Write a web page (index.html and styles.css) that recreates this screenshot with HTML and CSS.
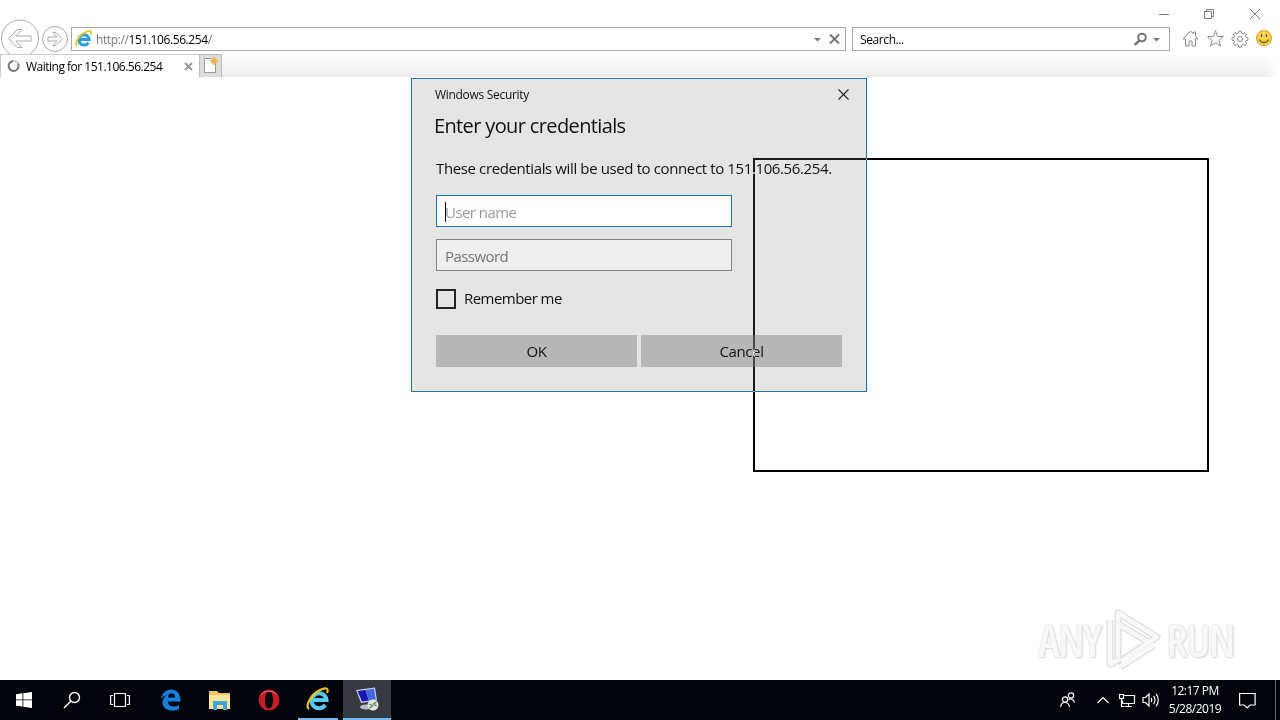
FILE: index.html
```html
<!DOCTYPE html>
<html lang="en">
<head>
    <meta charset="UTF-8">
    <meta name="viewport" content="width=device-width, initial-scale=1.0">
    <title>Windows Security</title>
    <link rel="stylesheet" href="styles.css">
</head>
<body>
    <div class="desktop">
        <header class="browser">
            <div class="window-controls">
                <svg width="110" height="20" viewBox="0 0 110 20" fill="none" stroke="#777">
                    <path d="M9 14.500h10"/>
                    <path d="M54.500 11.500h7v7h-7zM56.500 11.500v-2h7v7h-2"/>
                    <path d="M100 9l10 10M110 9l-10 10"/>
                </svg>
            </div>
            <div class="nav-bar">
                <div class="nav-buttons">
                    <svg width="71" height="36" viewBox="0 0 71 36" fill="#fff" stroke="#aaa">
                        <circle cx="20" cy="19.500" r="18.500"/>
                        <circle cx="55" cy="20" r="12.500"/>
                        <path d="M8.500 19.500l9-9h4.500l-6 6.500h15v5h-15l6 6.500h-4.500z"/>
                        <path d="M62.500 20l-6.500-6.500h-3l4 4.500h-9v4h9l-4 4.500h3z"/>
                    </svg>
                </div>
                <div class="address-bar">
                    <svg width="18" height="18" viewBox="0 0 18 18" fill="none">
                        <path d="M4 9.500h10.300a5.200 5.200 0 1 0-.8 3.200" stroke="#2d9be0" stroke-width="3"/>
                        <path d="M2 15.500C-1 14 4 5 11 2c4-2 6-1 4.500 2.500" stroke="#e5c51c" stroke-width="1.800"/>
                    </svg>
                    <span class="url">http://<b>151.106.56.254</b>/</span>
                    <svg class="address-tools" width="30" height="16" viewBox="0 0 30 16">
                        <path d="M1 7h7l-3.500 3.500z" fill="#777"/>
                        <path d="M17 3.500l9 9M26 3.500l-9 9" stroke="#777" stroke-width="2"/>
                    </svg>
                </div>
                <div class="search-bar">
                    <span>Search...</span>
                    <svg width="30" height="16" viewBox="0 0 30 16">
                        <circle cx="10" cy="6.500" r="3.800" fill="none" stroke="#777" stroke-width="2"/>
                        <path d="M7.500 9.500L2.500 14" stroke="#777" stroke-width="2.400"/>
                        <path d="M21 7h7l-3.500 3.500z" fill="#777"/>
                    </svg>
                </div>
                <div class="tools">
                    <svg width="92" height="22" viewBox="0 0 92 22" fill="none" stroke="#8c8c8c">
                        <path d="M1 12l7.500-8 3 3V5h2v4.500L16 12h-2.500v7H10v-5H7v5H3.500v-7z"/>
                        <path d="M33.500 3.500l2 6h6l-4.700 4 1.900 5.500-5.200-3.500-5.200 3.500 1.900-5.500-4.700-4h6z"/>
                        <path d="M56.800 4h2.400l.5 2 1.300.6 1.800-1.200 1.800 1.800-1.200 1.800.6 1.300 2 .5v2.400l-2 .5-.6 1.300 1.200 1.800-1.800 1.800-1.800-1.200-1.300.6-.5 2h-2.400l-.5-2-1.300-.6-1.800 1.200-1.800-1.800 1.200-1.800-.6-1.300-2-.5v-2.400l2-.5.6-1.300-1.200-1.800 1.800-1.800 1.800 1.200 1.300-.6z"/>
                        <circle cx="58" cy="12" r="2.500"/>
                        <circle cx="82" cy="11" r="7.500" fill="#fcd447" stroke="#d2a02b"/>
                        <path d="M79.500 7v3M84.500 7v3M77.500 12.500c1.500 4 7.500 4 9 0" stroke="#735c24" stroke-width="1.300"/>
                    </svg>
                </div>
            </div>
            <div class="tab-bar">
                <div class="tab">
                    <svg width="14" height="14" viewBox="0 0 14 14">
                        <path d="M6 2a5 5 0 1 0 5 2.500" fill="none" stroke="#777" stroke-width="2"/>
                        <path d="M6 2a5 5 0 0 1 5 2.500" fill="none" stroke="#ccc" stroke-width="2"/>
                    </svg>
                    <span class="tab-title">Waiting for 151.106.56.254</span>
                    <svg class="tab-close" width="9" height="9" viewBox="0 0 9 9">
                        <path d="M1 1l7 7M8 1l-7 7" stroke="#999" stroke-width="2"/>
                    </svg>
                </div>
                <div class="new-tab">
                    <svg width="22" height="22" viewBox="0 0 22 22">
                        <path d="M4.500 3.500h7l4 4v10h-11z" fill="#fff" stroke="#999"/>
                        <path d="M14 2v8M10 6h8M11.500 3.500l5 5M16.500 3.500l-5 5" stroke="#f5ae3c" stroke-width="1.300"/>
                    </svg>
                </div>
            </div>
        </header>

        <div class="dialog">
            <div class="dialog-title">
                <span>Windows Security</span>
                <svg width="11" height="11" viewBox="0 0 11 11">
                    <path d="M.5.5l10 10M10.500.5l-10 10" stroke="#222" stroke-width="1.100"/>
                </svg>
            </div>
            <h1>Enter your credentials</h1>
            <p>These credentials will be used to connect to 151.106.56.254.</p>
            <div class="field focused"><i class="caret"></i><span>User name</span></div>
            <div class="field"><span>Password</span></div>
            <div class="remember"><i class="checkbox"></i><span>Remember me</span></div>
            <div class="buttons">
                <div class="button">OK</div>
                <div class="button">Cancel</div>
            </div>
        </div>

        <!-- inverted outline of the window while it is dragged -->
        <div class="drag-outline"></div>

        <div class="watermark">
            <span>ANY</span>
            <svg width="60" height="66" viewBox="0 0 60 66" fill="none" stroke-linejoin="round">
                <path d="M15 50V6l39 24-36 24M15 17l32 19M7 13v44l10-5M17 60l34-22" stroke="#dedede" stroke-width="7"/>
                <path d="M15 50V6l39 24-36 24M15 17l32 19M7 13v44l10-5M17 60l34-22" stroke="#f8f8f8" stroke-width="4.500"/>
            </svg>
            <span>RUN</span>
        </div>

        <footer class="taskbar">
            <div class="task">
                <svg width="16" height="16" viewBox="0 0 16 16" fill="#fff">
                    <path d="M0 2.200l6.500-.9v6.200H0zM7.300 1.200L16 0v7.500H7.300zM0 8.300h6.500v6.200L0 13.700zM7.300 8.300H16V16l-8.700-1.200z"/>
                </svg>
            </div>
            <div class="task">
                <svg width="18" height="18" viewBox="0 0 18 18" fill="none" stroke="#fff" stroke-width="1.400">
                    <circle cx="11.500" cy="6.500" r="5"/>
                    <path d="M8 10l-7 7"/>
                </svg>
            </div>
            <div class="task">
                <svg width="20" height="16" viewBox="0 0 20 16" fill="none" stroke="#fff" stroke-width="1.200">
                    <path d="M4.500 1.500h11v13h-11zM3 3.500H.600v9H3M17 3.500h2.400v9H17"/>
                </svg>
            </div>
            <div class="task edge">
                <svg width="22" height="22" viewBox="0 0 22 22" fill="#1681dd">
                    <path d="M1 10C2 4 6 .500 11 .500c6 0 10 4.500 9.500 12H8c0 3 2 5 6 5 2 0 3.500-.5 5-1.500v4c-2 1-4 1.500-6.500 1.500C6 21.500 2.500 18 2.500 13c0-3 2-6 5-7.500C5 6 3 7.500 1 10zm7-1.500h7c0-2.500-1-4-3.500-4S8.500 6 8 8.500z"/>
                </svg>
            </div>
            <div class="task">
                <svg width="22" height="20" viewBox="0 0 22 20">
                    <path d="M0 1h8l2 2h11v16H0z" fill="#f2c65d"/>
                    <path d="M0 5h21v14H0z" fill="#fde59b"/>
                    <path d="M4 20v-9h14v9h-4v-5H8v5z" fill="#3da5dc"/>
                </svg>
            </div>
            <div class="task">
                <svg width="22" height="22" viewBox="0 0 22 22">
                    <path fill-rule="evenodd" d="M11 .5a10.500 10.500 0 1 0 0 21 10.500 10.500 0 0 0 0-21zm0 2c2.500 0 4 4 4 8.500s-1.500 8.500-4 8.500S7 15.500 7 11s1.500-8.500 4-8.500z" fill="#c51d25"/>
                    <path d="M3 6c3-5 13-5 16 0" fill="none" stroke="#e86a6a"/>
                </svg>
            </div>
            <div class="task open">
                <svg width="24" height="24" viewBox="0 0 24 24" fill="none">
                    <path d="M6 13h14.500a7.500 7.500 0 1 0-1.300 5" stroke="#57c8f1" stroke-width="4"/>
                    <path d="M3 22C-2 19 6 7 14 3c6-3 9-2 7 3" stroke="#f4bf25" stroke-width="2.200"/>
                </svg>
            </div>
            <div class="task open active">
                <svg width="24" height="24" viewBox="0 0 24 24">
                    <path d="M1 3l19-2.500 2 13L6 16z" fill="#c8d1e8"/>
                    <path d="M2.500 4l8-1L14 13.500l-7 1z" fill="#1717b7"/>
                    <path d="M10.500 3l8.500-1.200 1.800 10.700-6.800 1z" fill="#4668df"/>
                    <ellipse cx="11" cy="20" rx="6" ry="2.500" fill="#b9bfc8"/>
                    <circle cx="18" cy="18" r="5.500" fill="#e1e6df"/>
                    <path d="M14.500 17l3 2-3 2M21.500 15l-3 2 3 2" fill="none" stroke="#4b7950" stroke-width="1.200"/>
                </svg>
            </div>
            <div class="tray">
                <svg class="tray-icons" width="104" height="20" viewBox="0 0 104 20" fill="none" stroke="#fff" stroke-width="1.200">
                    <circle cx="11" cy="5.500" r="2.700"/>
                    <path d="M8.500 10c2-2 5-1 6 2.500"/>
                    <circle cx="5" cy="9.500" r="2.700"/>
                    <path d="M.600 17c.5-6 8-6 8.800 0"/>
                    <path d="M37.500 13l5.500-5.500 5.500 5.500"/>
                    <path d="M64 5.500h10.500v8H62.500v-3M68.500 13.500v3M65 16.500h7M59.500 4.500h4v4h-4zM61.500 8.500v8h3"/>
                    <path d="M83 7.500h2.500L89 4v12l-3.500-3.500H83zM91 8c1 1 1 3 0 4M93.500 6c2 2 2 6 0 8M96 4c3 3 3 9 0 12"/>
                </svg>
                <div class="clock">
                    <span class="time">12:17 PM</span>
                    <span class="date">5/28/2019</span>
                </div>
                <svg class="notifications" width="17" height="17" viewBox="0 0 17 17" fill="none" stroke="#fff" stroke-width="1.200">
                    <path d="M.600 1.500h15.500v11.500h-5l-3 3-3-3H.600z"/>
                </svg>
            </div>
        </footer>
    </div>
</body>
</html>
```

FILE: styles.css
```css
* {
    box-sizing: border-box;
}
body {
    margin: 0;
    font-family: "Open Sans", "Noto Sans", sans-serif;
    font-stretch: 88%;
    color: #111;
    background-color: #fff;
}
svg {
    display: block;
    flex-shrink: 0;
}
.desktop {
    position: relative;
    display: flex;
    flex-direction: column;
    width: 1280px;
    height: 720px;
    overflow: hidden;
    background-color: #fff;
}

/* Browser */
.browser {
    height: 77px;
    font-size: 12px;
    letter-spacing: -0.4px;
    color: #000;
    white-space: nowrap;
}
.window-controls {
    display: flex;
    justify-content: flex-end;
    height: 27px;
    padding-right: 20px;
}
.nav-bar {
    display: flex;
    height: 27px;
}
.nav-buttons {
    width: 71px;
    height: 27px;
    margin-top: -8px;
}
.address-bar,
.search-bar {
    display: flex;
    align-items: center;
    height: 24px;
    border: 1px solid #aaa;
}
.address-bar {
    width: 775px;
    padding-left: 3px;
}
.url {
    margin-left: 3px;
    padding-top: 1px;
    color: #777;
}
.url b {
    font-weight: normal;
    color: #000;
}
.address-tools {
    margin-left: auto;
    margin-right: 2px;
}
.search-bar {
    width: 318px;
    margin-left: 6px;
    padding: 0 7px;
    justify-content: space-between;
}
.search-bar span {
    padding-top: 1px;
}
.tools {
    margin-left: 12px;
}
.tab-bar {
    display: flex;
    height: 23px;
    background: linear-gradient(90deg, transparent 1262px, #fff 1278px), linear-gradient(#fff, #ececec);
}
.tab {
    display: flex;
    align-items: center;
    width: 199px;
    padding: 0 6px;
    border: 1px solid #ccc;
    border-width: 1px 0 0 1px;
    background-color: #fff;
}
.tab-title {
    margin-left: 5px;
    padding-top: 1px;
    letter-spacing: -0.5px;
}
.tab-close {
    margin-left: auto;
}
.new-tab {
    width: 23px;
    border: 1px solid #bbb;
    border-bottom: 0;
    background-color: #ddd;
}

/* Credentials window */
.dialog {
    position: absolute;
    left: 411px;
    top: 78px;
    width: 456px;
    height: 314px;
    padding: 0 24px;
    border: 1px solid #1a72b0;
    background-color: #e5e5e5;
    font-size: 15px;
    letter-spacing: -0.38px;
    white-space: nowrap;
}
.dialog-title {
    display: flex;
    align-items: center;
    justify-content: space-between;
    height: 31px;
    margin: 0 -7px 0 -1px;
    font-size: 12px;
    letter-spacing: -0.3px;
}
.dialog h1 {
    height: 28px;
    margin: 0 0 0 -2px;
    font-size: 20px;
    font-weight: normal;
    letter-spacing: -0.63px;
    line-height: 32px;
}
.dialog p {
    height: 57px;
    margin: 0;
    line-height: 60px;
}
.field {
    display: flex;
    align-items: center;
    width: 296px;
    height: 32px;
    margin-bottom: 12px;
    padding: 1px 8px 0;
    border: 1px solid #858585;
    background-color: #efefef;
    color: #737373;
    letter-spacing: -0.55px;
}
.field.focused {
    border-color: #1a72b0;
    background-color: #fff;
    color: #999;
}
.caret {
    width: 1px;
    height: 20px;
    margin-right: -1px;
    background-color: #000;
}
.remember {
    display: flex;
    align-items: center;
    height: 20px;
    margin-top: 18px;
    letter-spacing: -0.55px;
}
.remember span {
    margin-top: -2px;
}
.checkbox {
    width: 20px;
    height: 20px;
    margin-right: 8px;
    border: 2px solid #222;
}
.buttons {
    display: flex;
    gap: 4px;
    margin-top: 26px;
}
.button {
    width: 201px;
    height: 32px;
    background-color: #b7b7b7;
    line-height: 33px;
    text-align: center;
}
.drag-outline {
    position: absolute;
    left: 753px;
    top: 158px;
    width: 456px;
    height: 314px;
    border: 2px solid #fff;
    mix-blend-mode: difference;
}

/* Watermark */
.watermark {
    position: absolute;
    left: 1038px;
    top: 607px;
    display: flex;
    align-items: center;
    gap: 3px;
    color: #f8f8f8;
    font-size: 45px;
    font-weight: 600;
    letter-spacing: -1.800px;
    line-height: 66px;
    font-stretch: 75%;
    text-shadow: 0 0 2px #ccc, 1px 1px 2px #ddd;
}

/* Taskbar */
.taskbar {
    display: flex;
    height: 40px;
    margin-top: auto;
    background-color: #02040b;
    color: #fff;
}
.task {
    display: flex;
    align-items: center;
    justify-content: center;
    width: 48px;
    margin-right: 1px;
}
.task:first-child,
.task:nth-child(2) {
    margin-right: 0;
}
.edge {
    margin-left: 2px;
}
.open {
    width: 40px;
    margin: 0 5px 0 4px;
    border-bottom: 2px solid #76b9ed;
}
.active {
    width: 48px;
    margin: 0;
    background-color: #363940;
}
.tray {
    display: flex;
    align-items: center;
    margin-left: auto;
    margin-right: 4px;
    padding-right: 19px;
    border-right: 1px solid #666;
}
.clock {
    display: flex;
    flex-direction: column;
    align-items: center;
    width: 60px;
    margin: 0 14px 0 1px;
    font-size: 12px;
    letter-spacing: -0.5px;
    line-height: 18px;
    white-space: nowrap;
}
```
